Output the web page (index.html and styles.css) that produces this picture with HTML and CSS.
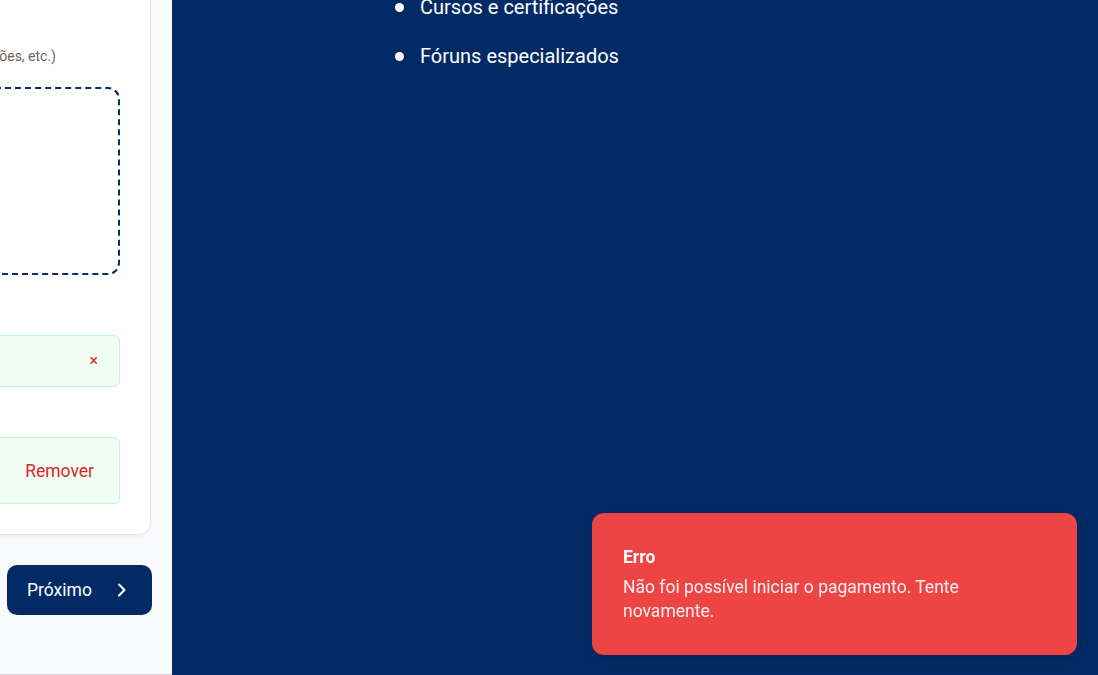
FILE: index.html
```html
<!DOCTYPE html>
<html lang="pt-BR">
<head>
<meta charset="utf-8">
<title>Cadastro</title>
<link rel="stylesheet" href="styles.css">
</head>
<body>
<div class="page">
  <section class="left">
    <div class="card">
      <p class="hint">Envie seus documentos (PDF, imagens, certificações, etc.)</p>
      <div class="dropzone"></div>
      <div class="file-row file-row-small"><span class="close">×</span></div>
      <div class="file-row file-row-large"><span class="remove">Remover</span></div>
    </div>
    <div class="actions">
      <button class="next-btn" type="button">
        <span>Próximo</span>
        <svg width="10" height="14" viewBox="0 0 10 14" aria-hidden="true"><path d="M2 1.5 L7.5 7 L2 12.5" fill="none" stroke="#fff" stroke-width="2" stroke-linecap="round" stroke-linejoin="round"/></svg>
      </button>
    </div>
  </section>
  <section class="right">
    <ul class="benefits">
      <li>Cursos e certificações</li>
      <li>Fóruns especializados</li>
    </ul>
  </section>
</div>
<div class="toast" role="alert">
  <div class="toast-title">Erro</div>
  <div class="toast-msg">Não foi possível iniciar o pagamento. Tente novamente.</div>
</div>
</body>
</html>
```
FILE: styles.css
```css
* { box-sizing: border-box; }
html, body { margin: 0; padding: 0; }
body {
  font-family: Roboto, "Liberation Sans", Arial, sans-serif;
  width: 1098px;
  height: 675px;
  overflow: hidden;
}
.page {
  display: flex;
  height: 675px;
}
.left {
  width: 172px;
  flex: none;
  background: #f9fafb;
  border-bottom: 1px solid #d4d4d8;
  overflow: hidden;
}
.card {
  width: 500px;
  margin-left: -349px;
  margin-top: -40px;
  background: #fff;
  border: 1px solid #e5e7eb;
  border-radius: 12px;
  box-shadow: 0 1px 3px rgba(0,0,0,0.06);
  padding: 85px 30px 30px;
}
.hint {
  margin: 0;
  font-size: 14px;
  line-height: 20px;
  color: #6e645e;
  text-align: right;
  padding-right: 64px;
  white-space: nowrap;
}
.dropzone {
  margin-top: 21px;
  height: 188px;
  border: 2px dashed #0a2d63;
  border-radius: 12px;
}
.file-row {
  display: flex;
  align-items: center;
  justify-content: flex-end;
  background: #f0fdf4;
  border: 1px solid #bbf7d0;
  border-radius: 6px;
}
.file-row-small {
  margin-top: 60px;
  height: 52px;
  padding-right: 21px;
}
.file-row-large {
  margin-top: 50px;
  height: 67px;
  padding-right: 25px;
}
.close {
  color: #dc2626;
  font-size: 16px;
  line-height: 1;
}
.remove {
  color: #dc2626;
  font-size: 17.5px;
}
.actions {
  margin-top: 30px;
  padding-left: 7px;
}
.next-btn {
  display: flex;
  align-items: center;
  justify-content: space-between;
  width: 145px;
  height: 50px;
  padding: 0 25px 0 20px;
  background: #022b66;
  color: #fff;
  border: none;
  border-radius: 10px;
  font-family: inherit;
  font-size: 17.5px;
  font-weight: 400;
}
.right {
  flex: 1;
  background: #022b66;
  padding-left: 223px;
}
.benefits {
  list-style: none;
  margin: -7px 0 0;
  padding: 0;
  display: flex;
  flex-direction: column;
  gap: 21px;
}
.benefits li {
  display: flex;
  align-items: center;
  gap: 16px;
  color: #fff;
  font-size: 20px;
  line-height: 28px;
}
.benefits li::before {
  content: "";
  width: 9px;
  height: 9px;
  border-radius: 50%;
  background: #fff;
  flex: none;
}
.toast {
  position: fixed;
  right: 21px;
  bottom: 20px;
  width: 485px;
  height: 142px;
  background: #ef4444;
  border-radius: 12px;
  padding: 32px 50px 30px 31px;
  color: #fff;
  box-shadow: 0 4px 12px rgba(0,0,0,0.15);
}
.toast-title {
  font-size: 17.5px;
  font-weight: 700;
  line-height: 24px;
  margin-bottom: 6px;
}
.toast-msg {
  font-size: 17.5px;
  line-height: 24px;
  color: rgba(255,255,255,0.92);
}
```
